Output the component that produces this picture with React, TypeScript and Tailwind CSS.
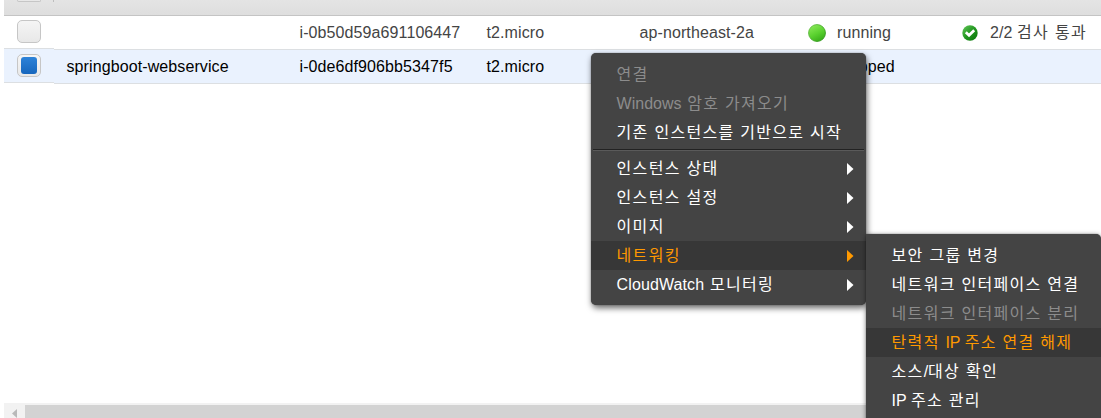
import React from 'react';

type ItemProps = { children: React.ReactNode; arrow?: boolean; state?: 'normal' | 'disabled' | 'active' };

const K = ({ children }: { children: React.ReactNode }) => (
  <span className="tracking-[1.3px]">{children}</span>
);

function Item({ children, arrow = false, state = 'normal' }: ItemProps) {
  const tone =
    state === 'disabled'
      ? 'text-[#8c8c8c]'
      : state === 'active'
        ? 'bg-[#373737] text-[#ff9900]'
        : 'text-white';
  return (
    <li className={`flex h-[29px] items-center justify-between pl-[25.6px] pr-[12px] leading-[29px] ${tone}`}>
      <span>{children}</span>
      {arrow && (
        <svg className="mt-[1px]" width="7" height="12" viewBox="0 0 7 12" fill="currentColor">
          <path d="M0 0L6.5 6L0 12Z" />
        </svg>
      )}
    </li>
  );
}

function Checkbox({ checked = false }: { checked?: boolean }) {
  return (
    <div className="flex h-[23px] w-6 items-center justify-center rounded-[5px] border border-[#c6c6c6] bg-linear-to-b from-[#f5f5f5] to-[#e8e8e8]">
      {checked && <div className="h-[17px] w-4 rounded-[3px] bg-linear-to-b from-[#2d83d9] to-[#1666bd]" />}
    </div>
  );
}

function Running() {
  return (
    <svg width="18" height="18" viewBox="0 0 18 18">
      <defs>
        <linearGradient id="run" x1="0.2" y1="0" x2="0.7" y2="1">
          <stop offset="0" stopColor="#8bea59" />
          <stop offset="0.55" stopColor="#5ad12f" />
          <stop offset="1" stopColor="#36ac18" />
        </linearGradient>
        <linearGradient id="rim" x1="0" y1="0" x2="1" y2="1">
          <stop offset="0" stopColor="#78ca58" />
          <stop offset="1" stopColor="#289313" />
        </linearGradient>
      </defs>
      <circle cx="9" cy="9" r="8.4" fill="url(#run)" stroke="url(#rim)" strokeWidth="1" />
    </svg>
  );
}

function Passed() {
  return (
    <svg width="16" height="16" viewBox="0 0 16 16">
      <defs>
        <linearGradient id="pass" x1="0" y1="0" x2="1" y2="1">
          <stop offset="0" stopColor="#65c95b" />
          <stop offset="0.5" stopColor="#229620" />
          <stop offset="1" stopColor="#087308" />
        </linearGradient>
      </defs>
      <circle cx="8" cy="8" r="7.7" fill="url(#pass)" />
      <path d="M3.8 7.3L7 10.3L12.2 5.2" fill="none" stroke="white" strokeWidth="2.7" />
    </svg>
  );
}

export default function App() {
  return (
    <div className="relative flex h-[418px] w-[1101px] flex-col overflow-hidden bg-white pl-1 font-['Liberation_Sans','Noto_Sans_CJK_KR',sans-serif] text-[16px]">
      <div className="flex h-4 shrink-0 border-b border-[#c4c4c4] bg-linear-to-b from-[#e4e4e4] to-[#dedede]">
        <div className="h-[2px] w-[50px] border-r border-[#bdbdbd] pl-[13px]">
          <div className="h-[2px] w-6 rounded-b-[5px] border-x border-b border-[#c6c6c6] bg-[#e8e8e8]" />
        </div>
      </div>

      <div className="flex h-[34px] shrink-0 text-[#444]">
        <div className="h-[33px] w-[50px] border-b border-[#dcdfe2] pt-1 pl-[13px]">
          <Checkbox />
        </div>
        <div className="flex flex-1 items-center whitespace-nowrap border-b border-[#dcdfe2] tracking-[0.1px]">
          <div className="w-[245.5px]" />
          <div className="w-[187px]">i-0b50d59a691106447</div>
          <div className="w-[153px]">t2.micro</div>
          <div className="w-[168.5px]">ap-northeast-2a</div>
          <div className="flex w-[154px] items-center gap-[11px]">
            <Running />
            <span>running</span>
          </div>
          <div className="flex items-center gap-[12px]">
            <Passed />
            <span>2/2 <K>검사 통과</K></span>
          </div>
        </div>
      </div>

      <div className="flex h-[34px] shrink-0 text-black">
        <div className="-mt-px h-[34px] w-[50px] border-b border-[#dcdfe2] bg-[#eaf2fe] pt-[5px] pl-[13px]">
          <Checkbox checked />
        </div>
        <div className="flex flex-1 items-center whitespace-nowrap border-b border-[#dcdfe2] bg-[#eaf2fe] tracking-[0.1px]">
          <div className="w-[245.5px] pl-[12.5px]">springboot-webservice</div>
          <div className="w-[187px]">i-0de6df906bb5347f5</div>
          <div className="w-[321.5px]">t2.micro</div>
          <div className="pl-[29px]">stopped</div>
        </div>
      </div>

      <div className="flex-1" />
      <div className="flex h-[15px] shrink-0 bg-[#f2f2f2]">
        <div className="w-[21px] pt-[6px] pl-2">
          <svg width="5" height="9" viewBox="0 0 5 9" fill="#b9b9b9">
            <path d="M5 0L0 4.5L5 9Z" />
          </svg>
        </div>
        <div className="mt-[2px] flex-1 bg-[#d3d3d3]" />
      </div>

      <ul className="absolute top-[53px] left-[591px] h-[252px] w-[275px] rounded-[5px] bg-[#444] pt-[7px] whitespace-nowrap shadow-[1px_3px_6px_rgba(0,0,0,0.6),0_0_1px_rgba(0,0,0,0.6)]">
        <Item state="disabled"><K>연결</K></Item>
        <Item state="disabled">Windows<K> 암호 가져오기</K></Item>
        <Item><K>기존 인스턴스를 기반으로 시작</K></Item>
        <li className="mx-[2px] mt-[2px] mb-[3px] h-[2px] border-t border-b border-t-[#222] border-b-[#5a5a5a]" />
        <Item arrow><K>인스턴스 상태</K></Item>
        <Item arrow><K>인스턴스 설정</K></Item>
        <Item arrow><K>이미지</K></Item>
        <Item arrow state="active"><K>네트워킹</K></Item>
        <Item arrow><span className="tracking-[0.1px]">CloudWatch</span><K> 모니터링</K></Item>
      </ul>

      <ul className="absolute top-[234px] left-[866px] h-[190px] w-[235px] rounded-tr-[5px] bg-[#444] pt-[7px] whitespace-nowrap shadow-[0_1px_5px_rgba(0,0,0,0.5),0_0_1px_rgba(0,0,0,0.6)]">
        <Item><K>보안 그룹 변경</K></Item>
        <Item><K>네트워크 인터페이스 연결</K></Item>
        <Item state="disabled"><K>네트워크 인터페이스 분리</K></Item>
        <Item state="active"><K>탄력적 </K>IP <K>주소 연결 해제</K></Item>
        <Item><K>소스</K>/<K>대상 확인</K></Item>
        <Item>IP <K>주소 관리</K></Item>
      </ul>
    </div>
  );
}
